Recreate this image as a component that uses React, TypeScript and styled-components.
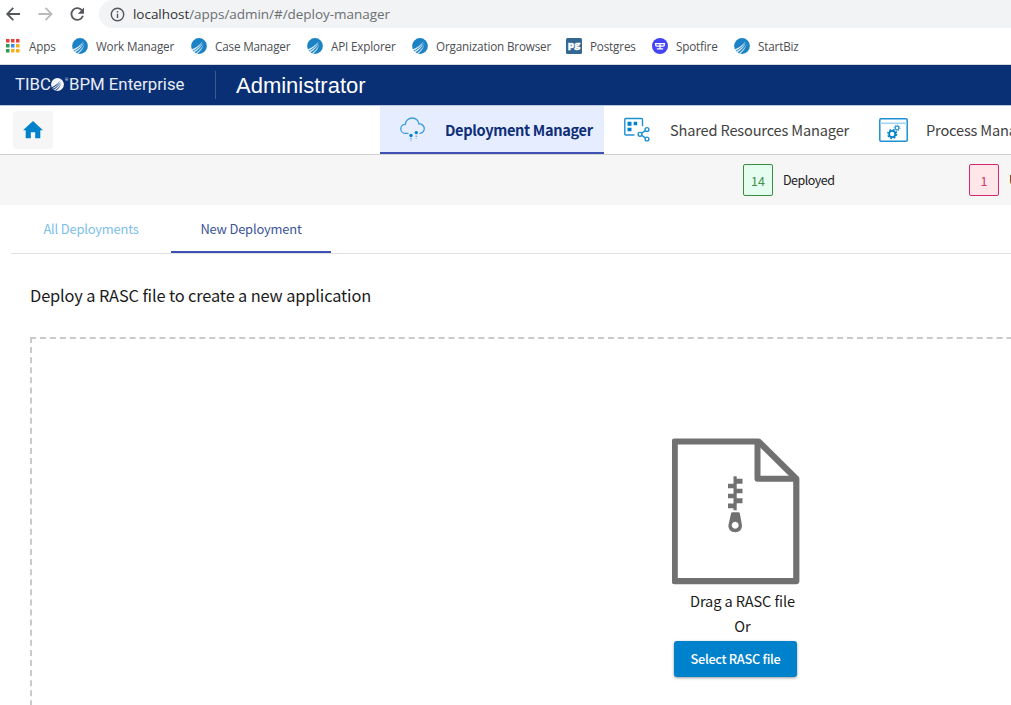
import React from 'react';
import styled, { createGlobalStyle, css } from 'styled-components';

const sourceSans = `'Noto Sans CJK SC', 'Open Sans', sans-serif`;
const segoe = `'Open Sans', 'Noto Sans', sans-serif`;

const GlobalStyle = createGlobalStyle`
  * { box-sizing: border-box; }
  body { margin: 0; background: #fff; overflow: hidden; }
`;

const Page = styled.div`
  width: 1011px;
  height: 705px;
  overflow: hidden;
  display: flex;
  flex-direction: column;
  font-family: ${sourceSans};
  color: #212121;
  white-space: nowrap;
`;

/* ---------- browser chrome ---------- */

const BrowserBar = styled.div`
  flex: none;
  height: 28px;
  display: flex;
  align-items: center;
`;

const BrowserIcons = styled.div`
  width: 99px;
  height: 28px;
  flex: none;
`;

const Omnibox = styled.div`
  flex: 1;
  height: 28px;
  display: flex;
  align-items: center;
  gap: 8px;
  padding-left: 11px;
  background: #f1f3f4;
  border-radius: 14px 0 0 14px;
`;

const Url = styled.span`
  font-family: ${segoe};
  font-size: 13.5px;
  line-height: 28px;
  letter-spacing: -0.04px;
  color: #6b6f73;
  b { font-weight: 400; color: #303236; }
`;

const BookmarkBar = styled.div`
  flex: none;
  height: 37px;
  display: flex;
  align-items: center;
  gap: 16px;
  padding-left: 5px;
  border-bottom: 1px solid #d5d8dd;
`;

const Bookmark = styled.div`
  display: flex;
  align-items: center;
  gap: 8px;
  svg { flex: none; }
`;

const BookmarkLabel = styled.span<{ $w: number }>`
  width: ${p => p.$w}px;
  letter-spacing: -0.17px;
  font-family: ${segoe};
  font-size: 11.7px;
  line-height: 18px;
  padding-bottom: 1px;
  color: #4b4e52;
`;

/* ---------- application header ---------- */

const Header = styled.header`
  flex: none;
  height: 40px;
  display: flex;
  align-items: center;
  background: #092f75;
  color: #fff;
`;

const Brand = styled.div`
  width: 216px;
  height: 28px;
  padding: 0 0 2px 15px;
  display: flex;
  align-items: center;
  border-right: 1px solid #3a5a92;
  font-family: Roboto, sans-serif;
  font-size: 16.8px;
  color: #e9edf5;
  svg { margin: 0 1px 0 0; }
`;

const Registered = styled.span`
  width: 4px;
  height: 14px;
  font-size: 4px;
  line-height: 5px;
`;

const AppTitle = styled.h1`
  margin: 0 0 0 20px;
  font-family: 'Liberation Sans', Arial, sans-serif;
  font-size: 22px;
  font-weight: 400;
  line-height: 38px;
  padding-top: 2px;
`;

/* ---------- module navigation ---------- */

const ModuleNav = styled.nav`
  flex: none;
  height: 50px;
  display: flex;
  border-top: 1px solid #bcc6dc;
  border-bottom: 1px solid #d2d2d2;
`;

const HomeButton = styled.button`
  margin: 5px 327px 0 13px;
  width: 40px;
  height: 38px;
  padding: 0;
  border: 0;
  border-radius: 4px;
  background: #f6f6f6;
  display: flex;
  align-items: center;
  justify-content: center;
  flex: none;
`;

const ModuleTab = styled.div<{ $active?: boolean; $w: number; $gap: number }>`
  flex: none;
  width: ${p => p.$w}px;
  height: 48px;
  display: flex;
  align-items: center;
  gap: ${p => p.$gap}px;
  padding-left: 20px;
  font-size: 14.6px;
  line-height: 24px;
  color: #424242;
  svg { flex: none; }
  ${p => p.$active && css`
    background: #e6edfe;
    border-bottom: 2px solid #3f51b5;
    color: #0e2f78;
    font-weight: 700;
  `}
`;

const ModuleLabel = styled.span<{ $ls: number; $drop?: number }>`
  letter-spacing: ${p => p.$ls}px;
  padding-top: ${p => p.$drop ?? 0}px;
`;

/* ---------- counters ---------- */

const StatusStrip = styled.div`
  flex: none;
  height: 50px;
  display: flex;
  align-items: center;
  padding-left: 743px;
  background: #f6f6f6;
`;

const Status = styled.div`
  flex: none;
  width: 226px;
  display: flex;
  align-items: center;
  gap: 10px;
  font-size: 12.5px;
  letter-spacing: -0.5px;
  line-height: 20px;
  color: #212121;
`;

const Count = styled.span<{ $tone: 'green' | 'red' }>`
  width: 30px;
  height: 32px;
  border-radius: 2px;
  line-height: 31px;
  text-align: center;
  letter-spacing: 0;
  ${p => p.$tone === 'green'
    ? css`background: #e5fdf0; border: 1px solid #388e3c; color: #43914a;`
    : css`background: #ffe6e9; border: 1px solid #d02a68; color: #c8386c;`}
`;

/* ---------- page tabs ---------- */

const Tabs = styled.div`
  flex: none;
  height: 49px;
  margin-left: 11px;
  display: flex;
  border-bottom: 1px solid #e0e0e0;
`;

const Tab = styled.div<{ $active?: boolean }>`
  width: 160px;
  height: 48px;
  text-align: center;
  font-size: 12.9px;
  letter-spacing: -0.18px;
  line-height: 47px;
  color: #7cc0ea;
  ${p => p.$active && css`
    color: #3b5598;
    border-bottom: 2px solid #3f51b5;
  `}
`;

/* ---------- upload area ---------- */

const Heading = styled.h2`
  flex: none;
  margin: 28px 0 0 30px;
  font-size: 16.4px;
  letter-spacing: -0.14px;
  font-weight: 400;
  line-height: 26px;
  color: #1b1b1b;
`;

const DropZone = styled.div`
  flex: none;
  width: 1411px;
  height: 440px;
  margin: 29px 0 0 30px;
  padding-top: 98px;
  border: 2px dashed #cacaca;
  display: flex;
  flex-direction: column;
  align-items: center;
  font-size: 14.6px;
  letter-spacing: -0.12px;
  line-height: 25px;
  color: #1b1b1b;
`;

const DropText = styled.span<{ $first?: boolean }>`
  padding-left: 14px;
  margin-top: ${p => (p.$first ? 3 : 0)}px;
`;

const SelectButton = styled.button`
  width: 123px;
  height: 36px;
  margin-top: 3px;
  border: 0;
  border-radius: 3px;
  background: #0081cb;
  box-shadow: 0 1px 3px rgba(0, 0, 0, 0.4);
  color: #fff;
  font-family: ${sourceSans};
  font-size: 12.8px;
  letter-spacing: -0.3px;
  font-weight: 500;
  line-height: 36px;
  padding: 0;
`;

const FileSvg = styled.svg`
  flex: none;
`;

/* ---------- drawings ---------- */

const NavArrows = () => (
  <svg width="99" height="28" viewBox="0 0 99 28" fill="none" strokeWidth="1.8">
    <path d="M20 14H7.5M13.3 7.9 7.2 14l6.1 6.1" stroke="#54575b" />
    <path d="M38.5 14H51M45.5 7.9l6.1 6.1-6.1 6.1" stroke="#b9babc" />
    <path d="M82.3 10.8A5.9 5.9 0 1 0 82.9 15.8" stroke="#54575b" />
    <path d="M84 7.5v6.2h-6.2z" fill="#54575b" />
  </svg>
);

const InfoIcon = () => (
  <svg width="15" height="15" viewBox="0 0 15 15" fill="none" stroke="#54575b" strokeWidth="1.4">
    <circle cx="7.5" cy="7.5" r="6.2" />
    <path d="M7.5 6.7v4.2M7.5 4v1.5" />
  </svg>
);

const AppsIcon = () => {
  const colors = ['#e8403a', '#e8403a', '#e8403a', '#2f9a58', '#4586ee', '#f3b11d', '#2f9a58', '#f3b11d', '#f3b11d'];
  return (
    <svg width="16" height="16" viewBox="0 0 16 16">
      {colors.map((c, i) => (
        <rect key={i} x={1 + (i % 3) * 5} y={1 + Math.floor(i / 3) * 5} width="3.5" height="3.5" fill={c} />
      ))}
    </svg>
  );
};

const TibcoDot = ({ size = 16, disc = '#1b83c5', cut = '#fff' }) => (
  <svg width={size} height={size} viewBox="0 0 16 16">
    <circle cx="8" cy="8" r="7.9" fill={disc} />
    <g fill={cut}>
      <path d="M.8 11.3C5 9.6 8.5 7.2 11.6 3.2 9.2 7.8 6 10.7 1.5 12.7z" opacity=".9" />
      <path d="M2 13.3C6.5 11 9.7 8.2 12 4.2 10.2 8.9 7.5 12 3.3 14.5z" opacity=".8" />
      <path d="M4.7 15.2C8.5 12.7 10.8 10 12.5 5.8 11.6 10.3 9.5 13.3 6.2 15.8z" opacity=".75" />
    </g>
  </svg>
);

const PostgresIcon = () => (
  <svg width="16" height="16" viewBox="0 0 16 16">
    <rect width="16" height="16" rx="1.5" fill="#336791" />
    <text x="8" y="10" textAnchor="middle" fontFamily="'Open Sans', sans-serif" fontWeight="800" fontSize="9.5" textLength="12.5" lengthAdjust="spacingAndGlyphs" fill="#fff" stroke="#fff" strokeWidth=".3">pg</text>
  </svg>
);

const SpotfireIcon = () => (
  <svg width="16" height="16" viewBox="0 0 16 16">
    <circle cx="8" cy="8" r="8" fill="#4345f5" />
    <path d="M3 5.6H13M3.7 5.6V7Q3.7 8.2 5 8.2H11Q12.3 8.2 12.3 7V5.6M8 5.5v6M4.8 10.9H11.2" fill="none" stroke="#fff" strokeWidth="1.3" />
  </svg>
);

const HomeIcon = () => (
  <svg width="20" height="18" viewBox="0 0 20 18">
    <path d="M10 0 20 9.2H17.3V17.3H12.2V11.2H7.8V17.3H2.7V9.2H0z" fill="#0081cb" />
  </svg>
);

const CloudIcon = () => (
  <svg width="26" height="26" viewBox="0 0 26 26">
    <path d="M8.5 17.3H5.2A4.5 4.5 0 0 1 5.4 8.3C5.5 4.5 8.7 2 12.3 2S18.7 4.7 18.9 8A4.7 4.7 0 1 1 20.3 17.3H19.5" fill="none" stroke="#3a9edb" strokeWidth="1.3" />
    <g fill="#0081cb">
      <circle cx="11" cy="19.5" r="1.7" />
      <circle cx="16.3" cy="16.6" r="1.7" />
      <rect x="10.2" y="22.2" width="1.6" height="1.3" opacity=".6" />
      <rect x="15.5" y="19.6" width="1.6" height="1.3" opacity=".6" />
      <rect x="10.2" y="24.3" width="1.6" height="1" opacity=".3" />
      <rect x="15.5" y="22" width="1.6" height="1" opacity=".3" />
    </g>
  </svg>
);

const SharedIcon = () => (
  <svg width="26" height="26" viewBox="0 0 26 26">
    <g fill="none" stroke="#1f8fd3" strokeWidth="1.4">
      <path d="M10.5 18H1.8Q.8 18 .8 17V2.5Q.8 1.5 1.8 1.5H17.5Q18.5 1.5 18.5 2.5V9.3" />
      <circle cx="23" cy="12.5" r="1.9" />
      <circle cx="16" cy="17.3" r="1.9" />
      <circle cx="23" cy="22" r="1.9" />
      <path d="M21.4 13.6 17.6 16.2M17.6 18.4 21.4 20.9" />
    </g>
    <path d="M3.5 4.7h4v4h-4zM9.7 4.7h3.5v3.5H9.7zM3.5 10.7h4v3.5h-4z" fill="#0081cb" />
  </svg>
);

const ProcessIcon = () => (
  <svg width="29" height="24" viewBox="0 0 29 24" fill="none">
    <rect x=".8" y=".8" width="27.4" height="22.4" rx="1.2" stroke="#1f8fd3" strokeWidth="1.5" />
    <path d="M1 5.3H28" stroke="#a5d3ef" strokeWidth="1.6" />
    <circle cx="13.2" cy="16" r="3.1" stroke="#0081cb" strokeWidth="1.8" />
    <circle cx="13.2" cy="16" r="4.5" stroke="#0081cb" strokeWidth="1.3" strokeDasharray="1.77 1.77" />
    <circle cx="18" cy="10" r="1.8" stroke="#2f97d6" strokeWidth="1.3" />
    <circle cx="18" cy="10" r="2.9" stroke="#2f97d6" strokeWidth="1" strokeDasharray="1.14 1.14" />
  </svg>
);

const ZipFileIcon = () => (
  <FileSvg width="128" height="148" viewBox="0.5 -0.3 128 148">
    <path d="M3.2 4.2H87L124.8 41.5V143.8H3.2z" fill="none" stroke="#717171" strokeWidth="6.2" strokeLinejoin="round" />
    <path d="M86 4.5V41.5H124" fill="none" stroke="#717171" strokeWidth="6" strokeLinejoin="round" />
    <g fill="#717171">
      <rect x="62" y="39" width="3.2" height="34" />
      <path d="M64 41.5h7v5h-7zM64 51.5h7v4.5h-7zM64 61h7v5h-7zM56.5 46.5h7v4.5h-7zM56.5 56.5h7v4.5h-7zM56.5 66.3h7v4.7h-7z" />
      <path fillRule="evenodd" d="M61 75H67Q68 75 68.3 76L70.4 87.5C71 92 68 95 63.7 95S56.4 92 57 87.5L59.6 76Q60 75 61 75zM63.7 84.5a3.5 3.5 0 1 0 .01 0z" />
    </g>
  </FileSvg>
);

const bookmarks = [
  { label: 'Apps', w: 27, icon: <AppsIcon /> },
  { label: 'Work Manager', w: 79, icon: <TibcoDot /> },
  { label: 'Case Manager', w: 76, icon: <TibcoDot /> },
  { label: 'API Explorer', w: 65, icon: <TibcoDot /> },
  { label: 'Organization Browser', w: 114, icon: <TibcoDot /> },
  { label: 'Postgres', w: 46, icon: <PostgresIcon /> },
  { label: 'Spotfire', w: 42, icon: <SpotfireIcon /> },
  { label: 'StartBiz', w: 41, icon: <TibcoDot /> },
];

export default function App() {
  return (
    <Page>
      <GlobalStyle />
      <BrowserBar>
        <BrowserIcons><NavArrows /></BrowserIcons>
        <Omnibox>
          <InfoIcon />
          <Url><b>localhost</b>/apps/admin/#/deploy-manager</Url>
        </Omnibox>
      </BrowserBar>
      <BookmarkBar>
        {bookmarks.map(b => (
          <Bookmark key={b.label}>
            {b.icon}
            <BookmarkLabel $w={b.w}>{b.label}</BookmarkLabel>
          </Bookmark>
        ))}
      </BookmarkBar>
      <Header>
        <Brand>
          TIBC<TibcoDot size={13} disc="#f2f5fa" cut="#092f75" /><Registered>®</Registered>BPM Enterprise
        </Brand>
        <AppTitle>Administrator</AppTitle>
      </Header>
      <ModuleNav>
        <HomeButton aria-label="Home"><HomeIcon /></HomeButton>
        <ModuleTab $active $w={224} $gap={19}>
          <CloudIcon />
          <ModuleLabel $ls={-0.35} $drop={2}>Deployment Manager</ModuleLabel>
        </ModuleTab>
        <ModuleTab $w={255} $gap={20}>
          <SharedIcon />
          <ModuleLabel $ls={-0.17}>Shared Resources Manager</ModuleLabel>
        </ModuleTab>
        <ModuleTab $w={240} $gap={18}>
          <ProcessIcon />
          <ModuleLabel $ls={-0.17}>Process Manager</ModuleLabel>
        </ModuleTab>
      </ModuleNav>
      <StatusStrip>
        <Status><Count $tone="green">14</Count>Deployed</Status>
        <Status><Count $tone="red">1</Count>Undeployed</Status>
      </StatusStrip>
      <Tabs>
        <Tab>All Deployments</Tab>
        <Tab $active>New Deployment</Tab>
      </Tabs>
      <Heading>Deploy a RASC file to create a new application</Heading>
      <DropZone>
        <ZipFileIcon />
        <DropText $first>Drag a RASC file</DropText>
        <DropText>Or</DropText>
        <SelectButton>Select RASC file</SelectButton>
      </DropZone>
    </Page>
  );
}
